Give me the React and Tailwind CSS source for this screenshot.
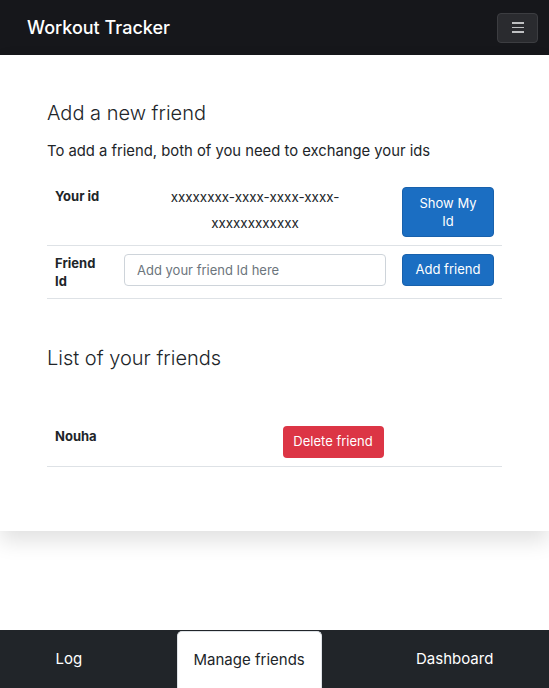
export default function App() {
  return (
    <div className="min-h-[688px] bg-white flex flex-col text-[#212529] font-['Inter','Noto_Sans',sans-serif]">
      <nav className="h-[55px] bg-[#16171b] flex items-center justify-between pl-[27px] pr-[11px]">
        <span className="text-white text-[18px] font-medium">Workout Tracker</span>
        <button className="w-[41px] h-[30px] rounded-[4px] bg-[#2a2b2f] border border-[#3c3d41] flex flex-col items-center justify-center gap-[3px]">
          <span className="block w-[12px] h-[1.5px] bg-[#bfc0c2]" />
          <span className="block w-[12px] h-[1.5px] bg-[#bfc0c2]" />
          <span className="block w-[12px] h-[1.5px] bg-[#bfc0c2]" />
        </button>
      </nav>

      <main className="bg-white shadow-[0_10px_20px_rgba(0,0,0,0.12)] px-[47px] pt-[40px] pb-[64px]">
        <h2 className="text-[20px] font-light leading-[36px]">Add a new friend</h2>
        <p className="text-[14.8px] leading-[22px] mt-[9px]">To add a friend, both of you need to exchange your ids</p>

        <table className="w-full mt-[16px] border-collapse">
          <tbody>
            <tr className="border-b border-[#dee2e6]">
              <td className="w-[69px] px-[8px] pt-[9px] pb-[8px] align-top text-[13px] font-bold leading-[18px]">Your id</td>
              <td className="px-[8px] pt-[6px] pb-[8px] align-top text-center text-[13.4px] leading-[26px]">
                <div className="mx-auto w-[200px]">xxxxxxxx-xxxx-xxxx-xxxx-xxxxxxxxxxxx</div>
              </td>
              <td className="w-[108px] px-[8px] pt-[9px] pb-[8px] align-top">
                <button className="w-[92px] h-[50px] rounded-[4px] bg-[#1b6ec2] border border-[#1861ac] text-white text-[13px] leading-[18px] px-[12px]">Show My Id</button>
              </td>
            </tr>
            <tr className="border-b border-[#dee2e6]">
              <td className="px-[8px] pt-[8px] pb-[8px] align-top text-[13px] font-bold leading-[18px]">Friend<br />Id</td>
              <td className="px-[8px] py-[8px] align-top">
                <input
                  placeholder="Add your friend Id here"
                  className="w-full h-[32px] rounded-[4px] border border-[#ced4da] px-[12px] text-[13px] placeholder:text-[#6c757d] outline-none"
                />
              </td>
              <td className="px-[8px] py-[8px] align-top">
                <button className="w-[92px] h-[32px] rounded-[4px] bg-[#1b6ec2] border border-[#1861ac] text-white text-[13px]">Add friend</button>
              </td>
            </tr>
          </tbody>
        </table>

        <h2 className="text-[20px] font-light leading-[36px] mt-[41px]">List of your friends</h2>

        <table className="w-full mt-[41px] border-collapse">
          <tbody>
            <tr className="border-b border-[#dee2e6]">
              <td className="w-1/2 px-[8px] pt-[10px] pb-[8px] align-top text-[13px] font-bold leading-[18px]">Nouha</td>
              <td className="px-[8px] pt-[9px] pb-[8px] align-top">
                <button className="w-[101px] h-[32px] rounded-[4px] bg-[#dc3545] text-white text-[13px]">Delete friend</button>
              </td>
            </tr>
          </tbody>
        </table>
      </main>

      <div className="flex-1" />

      <footer className="h-[58px] bg-[#212529] flex justify-around items-stretch text-[15px]">
        <a className="flex items-center px-[17px] text-white">Log</a>
        <a className="flex items-center px-[16px] bg-white text-[#212529] rounded-t-[5px] border border-b-0 border-[#dee2e6] mt-[1px]">Manage friends</a>
        <a className="flex items-center px-[17px] text-white">Dashboard</a>
      </footer>
    </div>
  );
}
